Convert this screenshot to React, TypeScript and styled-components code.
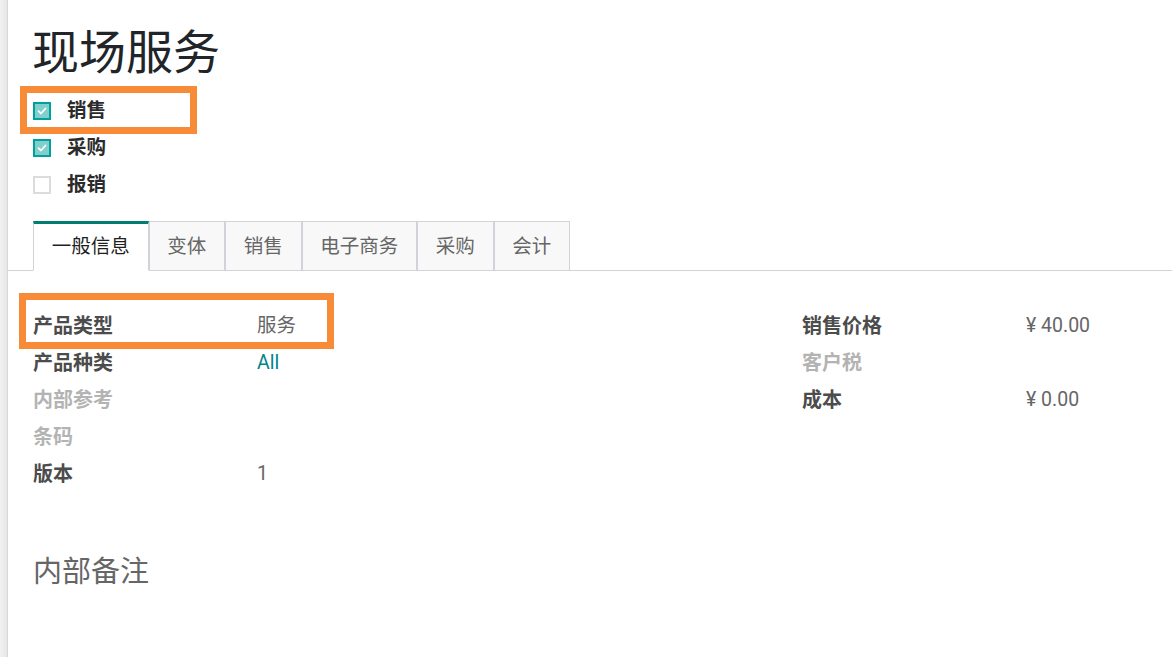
import React from "react";
import styled, { createGlobalStyle, css } from "styled-components";

const GlobalStyle = createGlobalStyle`
  html, body { margin: 0; padding: 0; background: #ffffff; }
  body { font-family: Roboto, "Noto Sans CJK SC", sans-serif; color: #4c4c4c; }
  *, *::before, *::after { box-sizing: border-box; }
`;

const Page = styled.div`
  display: flex;
  min-height: 657px;
  width: 1172px;
  overflow: hidden;
`;

const Rail = styled.div`
  flex: 0 0 8px;
  background: linear-gradient(to right, #f2f2f2, #e6e6e6);
  border-right: 1px solid #d6d8dc;
`;

const Sheet = styled.div`
  flex: 1;
  display: flex;
  flex-direction: column;
  background: #ffffff;
`;

const Header = styled.div`
  padding: 25px 0 0 25px;
`;

const Title = styled.h1`
  margin: 0 0 0 -1px;
  font-size: 47px;
  line-height: 56px;
  font-weight: 400;
  color: #212529;
`;

const Options = styled.div`
  margin-top: 11px;
  display: flex;
  flex-direction: column;
`;

const Highlight = css<{ $box?: [number, number, number, number] }>`
  position: relative;
  &::after {
    content: "";
    position: absolute;
    left: ${(p) => p.$box?.[0]}px;
    top: ${(p) => p.$box?.[1]}px;
    width: ${(p) => p.$box?.[2]}px;
    height: ${(p) => p.$box?.[3]}px;
    border: 7px solid #f78b37;
    pointer-events: none;
  }
`;

const OptionRow = styled.div<{ $box?: [number, number, number, number] }>`
  display: flex;
  align-items: center;
  gap: 16px;
  height: 37px;
  ${(p) => (p.$box ? Highlight : "")}
`;

const Box = styled.span<{ $checked: boolean }>`
  width: 18px;
  height: 18px;
  display: inline-flex;
  align-items: center;
  justify-content: center;
  border: 2px solid ${(p) => (p.$checked ? "#00a09d" : "#dcdcdc")};
  background: ${(p) => (p.$checked ? "#7fcfcd" : "#ffffff")};
`;

const OptionLabel = styled.span`
  font-size: 19.5px;
  font-weight: 700;
  color: #2b2b2b;
  line-height: 24px;
`;

const TabBar = styled.div`
  margin-top: 18px;
  padding-left: 25px;
  display: flex;
  border-bottom: 1px solid #d0d3d8;
`;

const Tab = styled.div<{ $active?: boolean }>`
  height: 50px;
  margin-bottom: -1px;
  padding: ${(p) => (p.$active ? "0 17.75px" : "2px 17.75px 0")};
  display: flex;
  align-items: center;
  font-size: 19.5px;
  line-height: 24px;
  border: 1px solid #d0d3d8;
  border-top: ${(p) => (p.$active ? "3px solid #017e6f" : "1px solid #d0d3d8")};
  border-bottom-color: ${(p) => (p.$active ? "#ffffff" : "#d0d3d8")};
  background: ${(p) => (p.$active ? "#ffffff" : "#f8f8f8")};
  color: ${(p) => (p.$active ? "#1f1f1f" : "#666666")};
`;

const Groups = styled.div`
  margin-top: 36px;
  padding-left: 25px;
  display: grid;
  grid-template-columns: 769px 1fr;
`;

const Group = styled.div`
  display: flex;
  flex-direction: column;
`;

const FieldRow = styled.div<{ $box?: [number, number, number, number] }>`
  display: grid;
  grid-template-columns: 224px 1fr;
  align-items: center;
  height: 37px;
  ${(p) => (p.$box ? Highlight : "")}
`;

const Label = styled.span<{ $muted?: boolean }>`
  font-size: 20px;
  font-weight: 700;
  line-height: 26px;
  color: ${(p) => (p.$muted ? "#b3b3b3" : "#4c4c4c")};
`;

const Value = styled.span<{ $link?: boolean }>`
  font-size: 19.5px;
  line-height: 26px;
  color: ${(p) => (p.$link ? "#01858a" : "#666666")};
`;

const NotesTitle = styled.h2`
  margin: 60px 0 0 0;
  padding-left: 25px;
  font-size: 29px;
  line-height: 40px;
  font-weight: 400;
  color: #666666;
`;

const Check = () => (
  <svg width="10" height="10" viewBox="0 0 10 10">
    <path d="M1.5 5.2 L4 7.5 L8.5 2.5" fill="none" stroke="#ffffff" strokeWidth="1.8" strokeLinecap="round" strokeLinejoin="round" />
  </svg>
);

type Opt = { label: string; checked: boolean; box?: [number, number, number, number] };
const options: Opt[] = [
  { label: "销售", checked: true, box: [-13, -6, 177, 48] },
  { label: "采购", checked: true },
  { label: "报销", checked: false },
];

const tabs = ["一般信息", "变体", "销售", "电子商务", "采购", "会计"];

type Field = { label: string; value?: string; muted?: boolean; link?: boolean; box?: [number, number, number, number] };
const left: Field[] = [
  { label: "产品类型", value: "服务", box: [-14, -14, 315, 56] },
  { label: "产品种类", value: "All", link: true },
  { label: "内部参考", muted: true },
  { label: "条码", muted: true },
  { label: "版本", value: "1" },
];
const right: Field[] = [
  { label: "销售价格", value: "¥ 40.00" },
  { label: "客户税", muted: true },
  { label: "成本", value: "¥ 0.00" },
];

const renderFields = (fields: Field[]) =>
  fields.map((f) => (
    <FieldRow key={f.label} $box={f.box}>
      <Label $muted={f.muted}>{f.label}</Label>
      <Value $link={f.link}>{f.value ?? ""}</Value>
    </FieldRow>
  ));

export default function App() {
  return (
    <>
      <GlobalStyle />
      <Page>
        <Rail />
        <Sheet>
          <Header>
            <Title>现场服务</Title>
            <Options>
              {options.map((o) => (
                <OptionRow key={o.label} $box={o.box}>
                  <Box $checked={o.checked}>{o.checked && <Check />}</Box>
                  <OptionLabel>{o.label}</OptionLabel>
                </OptionRow>
              ))}
            </Options>
          </Header>
          <TabBar>
            {tabs.map((t, i) => (
              <Tab key={t} $active={i === 0}>
                {t}
              </Tab>
            ))}
          </TabBar>
          <Groups>
            <Group>{renderFields(left)}</Group>
            <Group>{renderFields(right)}</Group>
          </Groups>
          <NotesTitle>内部备注</NotesTitle>
        </Sheet>
      </Page>
    </>
  );
}
